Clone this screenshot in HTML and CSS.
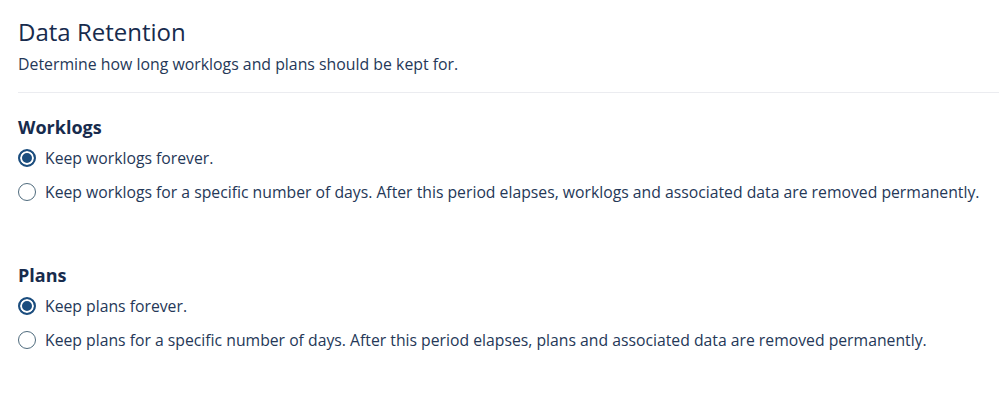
FILE: index.html
```html
<!DOCTYPE html>
<html lang="en">

<head>
    <meta charset="UTF-8">
    <meta name="viewport" content="width=device-width, initial-scale=1.0">
    <title>Data Retention</title>
    <link rel="stylesheet" href="styles.css">
</head>

<body>
    <div class="page">
        <div class="header">
            <h1 class="title">Data Retention</h1>
            <p class="desc">Determine how long worklogs and plans should be kept for.</p>
        </div>

        <div class="group">
            <h2 class="group-title">Worklogs</h2>
            <label class="option">
                <input type="radio" name="worklogs" checked>
                <span>Keep worklogs forever.</span>
            </label>
            <label class="option">
                <input type="radio" name="worklogs">
                <span>Keep worklogs for a specific number of days. After this period elapses, worklogs and associated data are removed permanently.</span>
            </label>
        </div>

        <div class="group">
            <h2 class="group-title">Plans</h2>
            <label class="option">
                <input type="radio" name="plans" checked>
                <span>Keep plans forever.</span>
            </label>
            <label class="option">
                <input type="radio" name="plans">
                <span>Keep plans for a specific number of days. After this period elapses, plans and associated data are removed permanently.</span>
            </label>
        </div>
    </div>
</body>

</html>
```

FILE: styles.css
```css
* {
    margin: 0;
    padding: 0;
    box-sizing: border-box;
}

body {
    background-color: #ffffff;
    font-family: 'Open Sans', 'Noto Sans', sans-serif;
    color: #172b4d;
}

.page {
    padding: 18px 0 0 18px;
}

.header {
    padding-bottom: 17px;
    border-bottom: 1px solid #ebecf0;
}

.title {
    font-size: 24px;
    font-weight: 400;
    line-height: 28px;
    color: #172b4d;
}

.desc {
    margin-top: 7px;
    font-size: 15.85px;
    line-height: 22px;
    color: #253858;
}

.group {
    padding-top: 22px;
    padding-bottom: 32px;
}

.group-title {
    font-size: 18px;
    font-weight: 700;
    line-height: 24px;
    color: #172b4d;
    margin-bottom: 2px;
}

.option {
    display: flex;
    align-items: center;
    gap: 9px;
    height: 34px;
    font-size: 15.75px;
    color: #253858;
}

.option input {
    appearance: none;
    width: 18px;
    height: 18px;
    border: 1.5px solid #4f6b7d;
    border-radius: 50%;
    background-color: #ffffff;
    flex-shrink: 0;
}

.option input:checked {
    border: 2px solid #1b4d7e;
    background-color: #1b4d7e;
    box-shadow: inset 0 0 0 2px #ffffff;
}
```
